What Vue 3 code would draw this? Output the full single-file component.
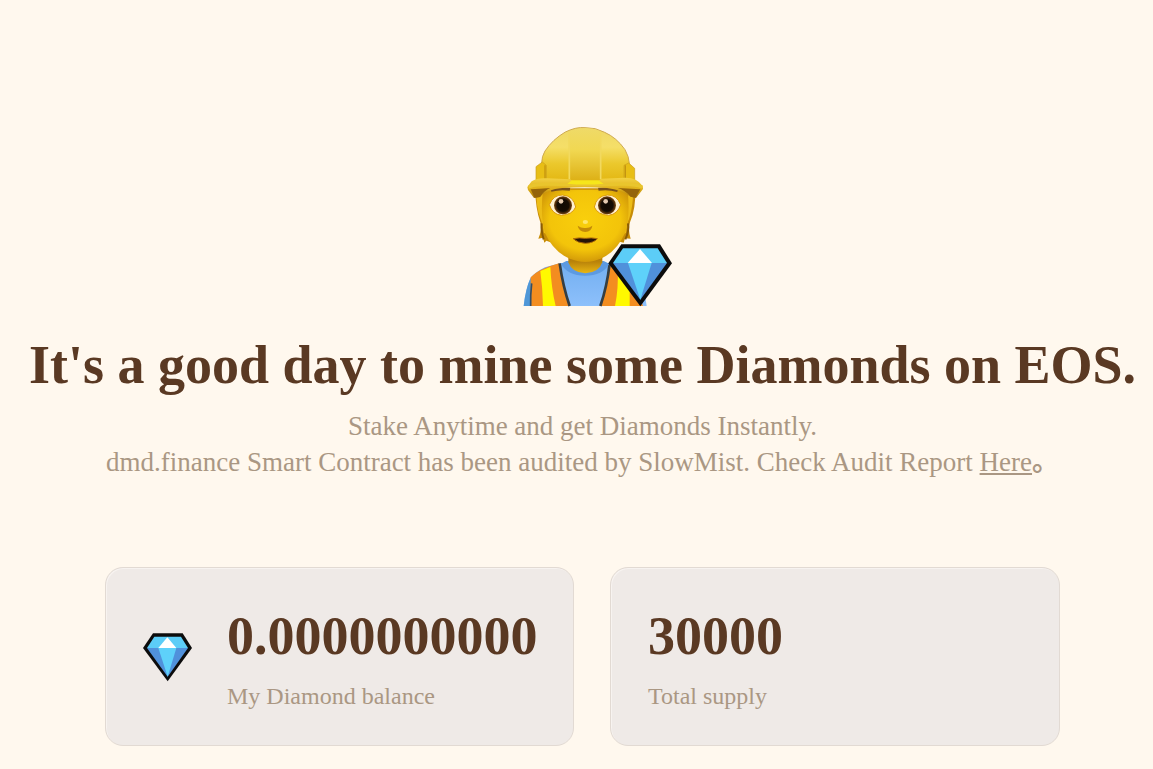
<script setup>
const cards = [
  { value: '0.0000000000', label: 'My Diamond balance', gem: true },
  { value: '30000', label: 'Total supply', gem: false },
]
</script>

<template>
  <main class="page">
    <svg class="miner" viewBox="0 0 495 585" aria-hidden="true">
      <defs>
        <linearGradient id="hat" x1="0" y1="0" x2="0" y2="1">
          <stop offset="0" stop-color="#eed765" />
          <stop offset=".35" stop-color="#f5df68" />
          <stop offset=".65" stop-color="#ebc82c" />
          <stop offset="1" stop-color="#e2b510" />
        </linearGradient>
        <linearGradient id="panel" x1="0" y1="0" x2="0" y2="1">
          <stop offset="0" stop-color="#efda68" />
          <stop offset=".4" stop-color="#f1d852" />
          <stop offset="1" stop-color="#dcae12" />
        </linearGradient>
        <linearGradient id="brim" x1="0" y1="0" x2="0" y2="1">
          <stop offset="0" stop-color="#f3d345" />
          <stop offset=".55" stop-color="#dfb019" />
          <stop offset="1" stop-color="#a87609" />
        </linearGradient>
        <radialGradient id="face" cx=".5" cy=".42" r=".6">
          <stop offset="0" stop-color="#f9cf0c" />
          <stop offset=".68" stop-color="#f3c40a" />
          <stop offset="1" stop-color="#cf9508" />
        </radialGradient>
        <linearGradient id="neck" x1="0" y1="0" x2="0" y2="1">
          <stop offset="0" stop-color="#a87108" />
          <stop offset=".5" stop-color="#b9830a" />
          <stop offset="1" stop-color="#e9b713" />
        </linearGradient>
        <linearGradient id="shirt" x1="0" y1="0" x2="0" y2="1">
          <stop offset="0" stop-color="#72aef0" />
          <stop offset="1" stop-color="#8dc0fb" />
        </linearGradient>
        <radialGradient id="iris">
          <stop offset="0" stop-color="#100902" />
          <stop offset=".66" stop-color="#160c03" />
          <stop offset="1" stop-color="#7a4712" />
        </radialGradient>
      </defs>
      <path d="M26 573Q32 520 47 488Q60 472 90 457L138 444H285L350 470Q386 500 395 573Z" fill="url(#shirt)" />
      <path d="M26 573Q32 520 47 488L52 573Z" fill="#4f97d7" />
      <path d="M47 573V487Q70 462 132 445Q142 500 165 573Z" fill="#f38d20" />
      <path d="M76 468L106 456Q109 520 122 573H84Q83 520 76 468Z" fill="#fff900" />
      <path d="M134 445Q144 515 164 573" fill="none" stroke="#353e43" stroke-width="8" />
      <path d="M284 445L350 470L384 573H254Q276 510 284 445Z" fill="#f38d20" />
      <path d="M308 460L344 490V573H300Q311 520 308 460Z" fill="#fff900" />
      <path d="M284 445Q276 515 256 573" fill="none" stroke="#353e43" stroke-width="8" />
      <path d="M47 573Q46 540 50 505" fill="none" stroke="#354e65" stroke-width="5" />
      <path d="M138 446Q158 482 210 482Q263 482 283 446L266 438H154Z" fill="#5c9ae2" />
      <path d="M160 405H262V442Q252 473 211 475Q170 473 160 442Z" fill="url(#neck)" />
      <path d="M60 220H361Q363 280 345 322Q338 345 347 371L330 370L326 383L306 378L115 385L94 377L88 383L84 368L70 371Q82 345 76 322Q62 284 60 220Z" fill="#c78c06" />
      <path d="M65 225Q62 275 76 310Q83 327 87 354L101 358L88 304L86 222ZM355 225Q354 275 343 310Q335 327 333 354L320 358L333 303V222Z" fill="#edbd16" />
      <path d="M84 224H338Q346 310 330 354Q307 407 260 430Q212 452 161 430Q113 407 90 354Q75 304 84 224Z" fill="url(#face)" />
      <path d="M80 325Q78 347 86 373M339 325Q343 347 331 373" fill="none" stroke="#895b05" stroke-width="6" />
      <path d="M108 226Q136 218 165 223M250 223Q280 218 308 227" fill="none" stroke="#79501b" stroke-width="9" />
      <path d="M103 269Q115 239 143 240Q176 243 182 276Q173 299 139 301Q112 298 103 269Z" fill="#fff0cf" stroke="#dc9b0d" stroke-width="3" />
      <path d="M317 269Q305 239 277 240Q244 243 238 276Q247 299 281 301Q308 298 317 269Z" fill="#fff0cf" stroke="#dc9b0d" stroke-width="3" />
      <circle cx="144" cy="271" r="27" fill="url(#iris)" />
      <circle cx="276" cy="271" r="27" fill="url(#iris)" />
      <circle cx="138" cy="259" r="7" fill="#e5cab0" />
      <circle cx="272" cy="259" r="7" fill="#e5cab0" />
      <ellipse cx="211" cy="321" rx="8" ry="6" fill="#ffe66b" />
      <path d="M188 332Q199 340 210 339Q222 340 232 332Q230 350 211 351Q191 350 188 332Z" fill="#c48b08" />
      <path d="M175 371Q192 367 211 370Q230 367 247 371Q236 384 211 385Q187 384 175 371Z" fill="#261407" stroke="#ad6a08" stroke-width="3" />
      <path d="M80 145Q80 124 90 108Q113 73 151 51Q184 35 210 38Q242 37 269 52Q305 68 330 104Q342 125 343 145L360 205H63Z" fill="url(#hat)" stroke="#cfaa50" stroke-width="3" />
      <path d="M160 50Q209 29 257 49L261 202H163Z" fill="url(#panel)" />
      <path d="M163 52V193M257 52V193" fill="none" stroke="#f2d95e" stroke-width="5" />
      <path d="M63 199V155L82 141L94 151V199M359 199V160L341 144L327 151V199Z" fill="#e8be15" stroke="#c99d1d" stroke-width="2" />
      <path d="M90 151V199M331 151V199" stroke="#c39411" stroke-width="4" />
      <path d="M37 216L50 199Q66 188 98 190L165 193L174 198H249L259 191L328 188Q366 187 383 213L384 222L363 249L347 245Q320 224 276 219Q209 214 142 219Q95 223 75 246L57 249L39 225Z" fill="url(#brim)" />
      <path d="M47 223Q73 222 106 219Q87 227 75 246L59 248ZM376 223L308 219Q330 225 347 245L361 248Z" fill="#94640a" />
      <path d="M41 216Q66 206 103 208Q208 212 316 208Q355 206 382 216" fill="none" stroke="#e9c52d" stroke-width="9" />
      <path d="M157 206L171 196H250L266 206Q211 211 157 206Z" fill="#f6e61b" />
      <g transform="translate(280 388)">
        <path d="M39 0H155L191 57L96 186L0 57Z" fill="#0c0c0c" />
        <path d="M44 12H148L176 56H14Z" fill="#5ccdf7" />
        <path d="M14 56H176L96 166Z" fill="#5091db" />
        <path d="M59 56H130L96 166Z" fill="#5ed1fa" />
        <path d="M95 14L131 56H58Z" fill="#fff" />
      </g>
    </svg>

    <h1>It's a good day to mine some Diamonds on EOS.</h1>
    <p class="intro">
      <span>Stake Anytime and get Diamonds Instantly.</span><br />
      <span>dmd.finance Smart Contract has been audited by SlowMist. Check Audit Report <a>Here</a><span class="stop">。</span></span>
    </p>

    <section class="cards">
      <article v-for="card in cards" :key="card.label" class="card" :class="{ balance: card.gem }">
        <svg v-if="card.gem" class="gem" viewBox="0 0 147 147" aria-hidden="true">
          <path d="M30 1H119L147 45L74 145L0 45Z" fill="#0c0c0c" />
          <path d="M34 11H114L135 45H12Z" fill="#5ccdf7" />
          <path d="M12 45H135L74 131Z" fill="#5091db" />
          <path d="M46 45H100L74 131Z" fill="#5ed1fa" />
          <path d="M73 13L100 45H46Z" fill="#fff" />
        </svg>
        <div>
          <strong>{{ card.value }}</strong>
          <span class="label">{{ card.label }}</span>
        </div>
      </article>
    </section>
  </main>
</template>

<style>
body {
  background: #fff8ee;
  overflow: hidden;
}
</style>

<style scoped>
.page {
  box-sizing: border-box;
  width: 1165px;
  height: 769px;
  padding-top: 115px;
  display: flex;
  flex-direction: column;
  align-items: center;
  color: #5a3923;
  background: #fff8ee;
  font-family: "Liberation Serif", "Noto Sans CJK SC", serif;
}
.miner {
  width: 165px;
  height: 195px;
  margin-left: 30px;
  flex: none;
}
h1 {
  margin: 24px 0 0;
  font-size: 54px;
  line-height: 62px;
  white-space: nowrap;
}
.intro {
  margin: 12px 0 0;
  color: #aa9783;
  font-size: 27px;
  line-height: 36px;
  text-align: center;
  white-space: nowrap;
}
a {
  text-decoration: underline;
}
.stop {
  display: inline-block;
  width: 27px;
  font-weight: 700;
}
.cards {
  display: flex;
  gap: 36px;
  width: 955px;
  margin-top: 87px;
}
.card {
  box-sizing: border-box;
  width: 450px;
  height: 179px;
  padding: 36px 37px 35px;
  display: flex;
  border: 1px solid #e2dad3;
  border-radius: 18px;
  background: #efeae7;
  box-shadow: inset 1px 1px 0 #f7f3f0;
}
.balance {
  width: 469px;
  padding-right: 35px;
}
.gem {
  flex: none;
  width: 49px;
  height: 49px;
  margin: 29px 35px 0 0;
}
strong,
.label {
  display: block;
  white-space: nowrap;
}
strong {
  font-size: 54px;
  line-height: 64px;
}
.label {
  margin-top: 14px;
  color: #aa9783;
  font-size: 24px;
  line-height: 28px;
}
</style>
